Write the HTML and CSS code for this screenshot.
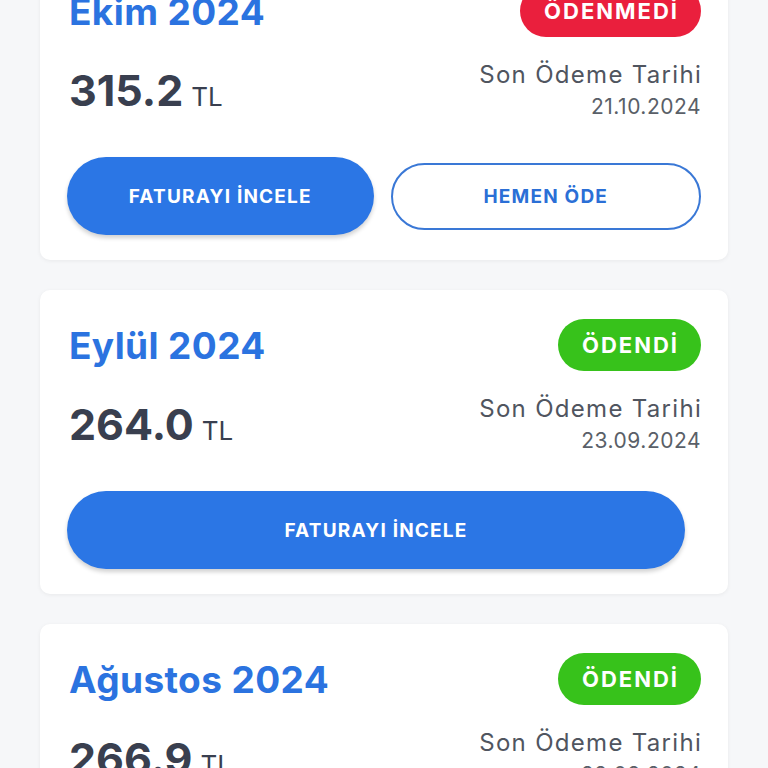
FILE: index.html
```html
<!DOCTYPE html>
<html lang="tr">
<head>
<meta charset="utf-8">
<link rel="stylesheet" href="styles.css">
</head>
<body>
<div class="list">
  <div class="card">
    <div class="head">
      <div class="month">Ekim 2024</div>
      <div class="badge unpaid">ÖDENMEDİ</div>
    </div>
    <div class="info">
      <div class="amount"><span class="num">315.2</span><span class="cur">TL</span></div>
      <div class="due">
        <div class="due-label">Son Ödeme Tarihi</div>
        <div class="due-date">21.10.2024</div>
      </div>
    </div>
    <div class="actions">
      <button class="btn primary">FATURAYI İNCELE</button>
      <button class="btn outline">HEMEN ÖDE</button>
    </div>
  </div>
  <div class="card">
    <div class="head">
      <div class="month">Eylül 2024</div>
      <div class="badge paid">ÖDENDİ</div>
    </div>
    <div class="info">
      <div class="amount"><span class="num">264.0</span><span class="cur">TL</span></div>
      <div class="due">
        <div class="due-label">Son Ödeme Tarihi</div>
        <div class="due-date">23.09.2024</div>
      </div>
    </div>
    <div class="actions single">
      <button class="btn primary">FATURAYI İNCELE</button>
    </div>
  </div>
  <div class="card">
    <div class="head">
      <div class="month">Ağustos 2024</div>
      <div class="badge paid">ÖDENDİ</div>
    </div>
    <div class="info">
      <div class="amount"><span class="num">266.9</span><span class="cur">TL</span></div>
      <div class="due">
        <div class="due-label">Son Ödeme Tarihi</div>
        <div class="due-date">22.08.2024</div>
      </div>
    </div>
    <div class="actions single">
      <button class="btn primary">FATURAYI İNCELE</button>
    </div>
  </div>
</div>
</body>
</html>
```
FILE: styles.css
```css
html, body {
  margin: 0;
  padding: 0;
  background: #f6f7f9;
  font-family: "Inter", "DejaVu Sans", sans-serif;
  overflow: hidden;
  height: 768px;
}
.list {
  margin-top: -44px;
  padding: 0 40px;
  display: flex;
  flex-direction: column;
  gap: 30px;
}
.card {
  background: #ffffff;
  border-radius: 10px;
  box-shadow: 0 1px 4px rgba(0, 0, 0, 0.06);
  height: 304px;
  box-sizing: border-box;
  padding: 29px 27px 0 27px;
}
.head {
  display: flex;
  justify-content: space-between;
  align-items: center;
  height: 52px;
}
.month {
  color: #2b73e0;
  font-weight: 700;
  font-size: 37px;
  letter-spacing: 0.4px;
  padding-left: 2px;
}
.badge {
  height: 52px;
  border-radius: 26px;
  display: flex;
  align-items: center;
  padding: 0 22px 0 24px;
  color: #fff;
  font-weight: 700;
  font-size: 22px;
  letter-spacing: 2px;
}
.badge.paid { background: #37c21b; }
.badge.unpaid { background: #ea1f3d; }
.info {
  display: flex;
  justify-content: space-between;
  align-items: flex-start;
  margin-top: 22px;
  height: 98px;
}
.amount {
  margin-top: 5px;
  padding-left: 2px;
  color: #393f4f;
}
.num {
  font-weight: 700;
  font-size: 43px;
}
.cur {
  font-size: 26px;
  margin-left: 8px;
}
.due {
  text-align: right;
}
.due-label {
  font-size: 24px;
  color: #50555f;
  line-height: 32px;
  letter-spacing: 1.3px;
  margin-right: -1px;
}
.due-date {
  font-size: 21px;
  color: #5a5f68;
  line-height: 32px;
  letter-spacing: 0.5px;
}
.actions {
  display: flex;
  gap: 17px;
  align-items: center;
  height: 78px;
}
.actions.single {
  padding-right: 16px;
}
.btn {
  flex: 1;
  border-radius: 39px;
  font-family: inherit;
  font-weight: 700;
  font-size: 19px;
  letter-spacing: 1.2px;
  cursor: pointer;
}
.btn.primary {
  height: 78px;
  background: #2b76e5;
  color: #fff;
  border: none;
  box-shadow: 0 3px 4px rgba(0, 0, 0, 0.18);
}
.btn.outline {
  height: 67px;
  background: #fff;
  color: #2b6fd6;
  border: 2px solid #3a78d6;
}
```
